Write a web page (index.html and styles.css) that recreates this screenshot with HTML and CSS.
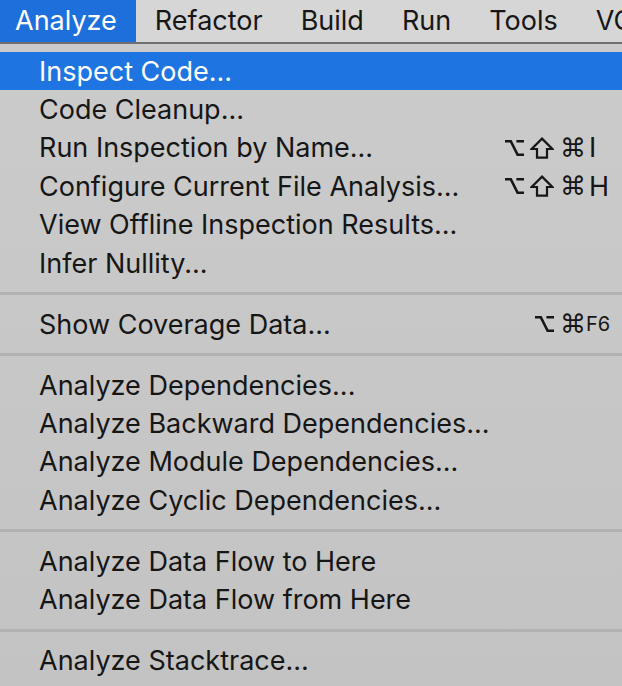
FILE: index.html
```html
<!DOCTYPE html>
<html>
<head>
<meta charset="utf-8">
<link rel="stylesheet" href="styles.css">
</head>
<body>
<div class="menubar">
  <div class="mb-item active">Analyze</div>
  <div class="mb-item">Refactor</div>
  <div class="mb-item">Build</div>
  <div class="mb-item">Run</div>
  <div class="mb-item">Tools</div>
  <div class="mb-item">VCS</div>
</div>
<div class="menu">
  <div class="row selected"><span class="label">Inspect Code...</span></div>
  <div class="row"><span class="label">Code Cleanup...</span></div>
  <div class="row"><span class="label">Run Inspection by Name...</span>
    <span class="mods">
      <svg class="opt" width="19" height="20" viewBox="0 0 19 20" aria-label="Option"><path d="M0 3.2H5.8L12.6 16.8H19M11.4 3.2H19"/></svg>
      <svg class="shift" width="24" height="22" viewBox="0 0 24 22" aria-label="Shift"><path d="M12 1.6L22.4 12H17V20.6H7V12H1.6Z"/></svg>
      <span class="cmd">⌘</span>
    </span><span class="key">I</span></div>
  <div class="row"><span class="label">Configure Current File Analysis...</span>
    <span class="mods">
      <svg class="opt" width="19" height="20" viewBox="0 0 19 20" aria-label="Option"><path d="M0 3.2H5.8L12.6 16.8H19M11.4 3.2H19"/></svg>
      <svg class="shift" width="24" height="22" viewBox="0 0 24 22" aria-label="Shift"><path d="M12 1.6L22.4 12H17V20.6H7V12H1.6Z"/></svg>
      <span class="cmd">⌘</span>
    </span><span class="key">H</span></div>
  <div class="row"><span class="label">View Offline Inspection Results...</span></div>
  <div class="row"><span class="label">Infer Nullity...</span></div>
  <div class="sep"></div>
  <div class="row"><span class="label">Show Coverage Data...</span>
    <span class="mods">
      <svg class="opt" width="19" height="20" viewBox="0 0 19 20" aria-label="Option"><path d="M0 3.2H5.8L12.6 16.8H19M11.4 3.2H19"/></svg>
      <span class="cmd">⌘</span>
    </span><span class="key small">F6</span></div>
  <div class="sep"></div>
  <div class="row"><span class="label">Analyze Dependencies...</span></div>
  <div class="row"><span class="label">Analyze Backward Dependencies...</span></div>
  <div class="row"><span class="label">Analyze Module Dependencies...</span></div>
  <div class="row"><span class="label">Analyze Cyclic Dependencies...</span></div>
  <div class="sep"></div>
  <div class="row"><span class="label">Analyze Data Flow to Here</span></div>
  <div class="row"><span class="label">Analyze Data Flow from Here</span></div>
  <div class="sep"></div>
  <div class="row"><span class="label">Analyze Stacktrace...</span></div>
</div>
</body>
</html>
```

FILE: styles.css
```css
html, body {
  margin: 0;
  padding: 0;
}
body {
  width: 622px;
  height: 686px;
  overflow: hidden;
  background: #c7c7c7;
  font-family: "Inter", "Liberation Sans", sans-serif;
  color: #161616;
}
.menubar {
  display: flex;
  height: 42px;
  background: #d6d6d6;
  border-bottom: 2px solid #6e6e6e;
  white-space: nowrap;
}
.mb-item {
  display: flex;
  align-items: center;
  padding: 0 19px;
  font-size: 27px;
  line-height: 42px;
}
.mb-item.active {
  padding-left: 15px;
  background: #1d6fdb;
  color: #fff;
}
.menu {
  padding-top: 8px;
  background: linear-gradient(#cbcbcb, #c3c3c3);
  height: 642px;
}
.row {
  display: grid;
  grid-template-columns: 1fr 100px 35px;
  align-items: center;
  height: 38.4px;
  padding-left: 39px;
  font-size: 27px;
  white-space: nowrap;
}
.row.selected {
  background: #1e74e0;
  color: #fff;
}
.label {
  grid-column: 1;
}
.mods {
  grid-column: 2;
  justify-self: end;
  display: inline-flex;
  align-items: center;
  gap: 6px;
  margin-right: 1px;
}
.mods svg {
  display: block;
  fill: none;
  stroke: #161616;
}
.opt {
  stroke-width: 2.6;
}
.shift {
  stroke-width: 2.2;
  stroke-linejoin: miter;
}
.cmd {
  font-family: "DejaVu Sans", sans-serif;
  font-size: 26px;
  line-height: 1;
}
.key {
  grid-column: 3;
  padding-left: 2px;
}
.key.small {
  font-size: 20px;
  padding-left: 0;
  margin-left: -1px;
}
.sep {
  height: 22.6px;
  display: flex;
  align-items: center;
}
.sep::before {
  content: "";
  display: block;
  width: 100%;
  height: 3px;
  background: #b2b2b2;
}
```
